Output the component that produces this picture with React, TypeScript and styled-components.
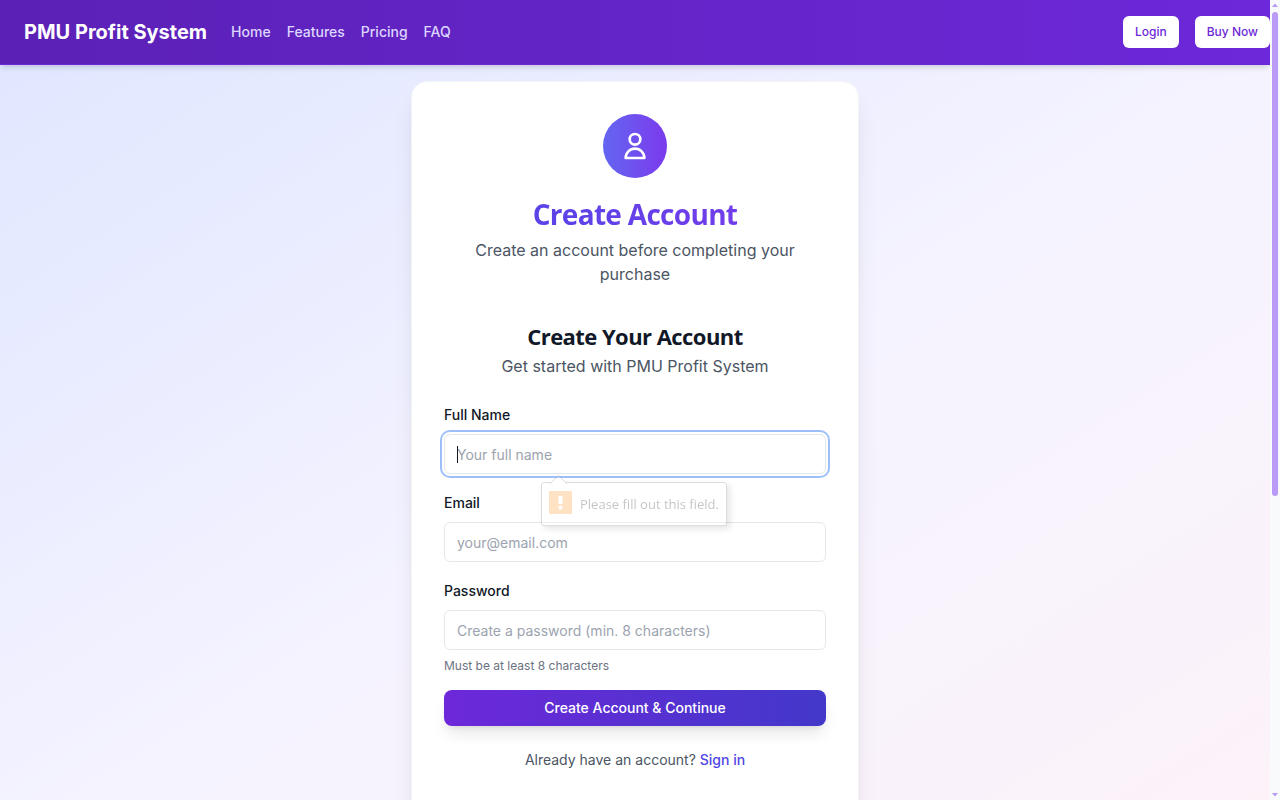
import React from 'react';
import styled, { createGlobalStyle } from 'styled-components';

const GlobalStyle = createGlobalStyle`
  *, *::before, *::after { box-sizing: border-box; }
  body {
    margin: 0;
    font-family: Inter, "Liberation Sans", sans-serif;
    font-size: 16px;
    line-height: 24px;
    color: #111827;
  }
  h1, h2, p { margin: 0; }
  a { text-decoration: none; }
`;

const Shell = styled.div`
  display: flex;
  height: 100vh;
  overflow: hidden;
  background: #f8fafc;
`;

const Page = styled.div`
  flex: 1;
  min-width: 0;
  display: flex;
  flex-direction: column;
  overflow: hidden;
`;

const Header = styled.header`
  position: relative;
  flex: none;
  display: flex;
  align-items: center;
  justify-content: space-between;
  height: 65px;
  padding-left: 24px;
  border-bottom: 1px solid #6d28d9;
  background: linear-gradient(to right, #5b21b6, #6d28d9);
  box-shadow: 0 4px 6px -1px rgba(0, 0, 0, 0.1), 0 2px 4px -2px rgba(0, 0, 0, 0.1);
`;

const Nav = styled.nav`
  display: flex;
  align-items: center;
  gap: 16px;
`;

const Brand = styled.a`
  margin-right: 8px;
  font-size: 20px;
  line-height: 28px;
  font-weight: 700;
  color: #fff;
`;

const NavLink = styled.a`
  font-size: 14px;
  line-height: 20px;
  font-weight: 500;
  color: #ddd6fe;
`;

const Actions = styled.div`
  display: flex;
  gap: 16px;
`;

const ActionButton = styled.button`
  height: 32px;
  padding: 0 12px;
  border: 0;
  border-radius: 6px;
  background: #fff;
  font: 500 12px/16px Inter, sans-serif;
  color: #6d28d9;
`;

const Main = styled.main`
  flex: 1 0 auto;
  display: flex;
  align-items: flex-start;
  justify-content: center;
  padding: 16px 16px 48px;
  background: linear-gradient(to bottom right, #e0e7ff, #f5f3ff, #fdf2f8);
`;

const Card = styled.section`
  width: 100%;
  max-width: 448px;
  padding: 32px;
  border: 1px solid #f3f4f6;
  border-radius: 16px;
  background: #fff;
  box-shadow: 0 20px 25px -5px rgba(0, 0, 0, 0.1), 0 8px 10px -6px rgba(0, 0, 0, 0.1);
`;

const Intro = styled.div`
  display: flex;
  flex-direction: column;
  align-items: center;
  margin-bottom: 34px;
  text-align: center;
`;

const Avatar = styled.div`
  display: flex;
  align-items: center;
  justify-content: center;
  width: 64px;
  height: 64px;
  margin-bottom: 18px;
  border-radius: 50%;
  background: linear-gradient(to right, #6366f1, #7c3aed);
`;

const Title = styled.h1`
  width: 100%;
  margin-bottom: 6px;
  font: 700 28px/36px "Open Sans", "Noto Sans", sans-serif;
  letter-spacing: -0.025em;
  background: linear-gradient(to right, #4f46e5, #7c3aed);
  background-clip: text;
  -webkit-background-clip: text;
  color: transparent;
`;

const Lead = styled.p`
  color: #4b5563;
`;

const FormHead = styled.div`
  margin-bottom: 24px;
  text-align: center;
`;

const Subtitle = styled.h2`
  margin-bottom: 2px;
  font: 700 22px/32px "Open Sans", "Noto Sans", sans-serif;
  letter-spacing: -0.025em;
`;

const Form = styled.form`
  display: flex;
  flex-direction: column;
  gap: 16px;
`;

const Field = styled.div`
  display: flex;
  flex-direction: column;
`;

const Label = styled.label`
  margin-bottom: 6px;
  font-size: 14px;
  line-height: 26px;
  font-weight: 500;
  color: #111827;
`;

const Control = styled.div`
  position: relative;
`;

const Input = styled.input<{ $active?: boolean }>`
  display: block;
  width: 100%;
  height: 40px;
  padding: 8px 12px;
  border: 1px solid #e5e7eb;
  border-radius: 6px;
  outline: none;
  background: #fff;
  font: 400 14px/20px Inter, sans-serif;
  color: #111827;
  box-shadow: ${(p) => (p.$active ? '0 0 0 2px #fff, 0 0 0 4px #9dc0fa' : 'none')};
  &::placeholder { color: #9ca3af; opacity: 1; }
`;

const Caret = styled.span`
  position: absolute;
  top: 12px;
  left: 13px;
  width: 1px;
  height: 17px;
  background: #111827;
`;

const Hint = styled.p`
  margin-top: 8px;
  font-size: 12px;
  line-height: 16px;
  color: #6b7280;
`;

const Submit = styled.button`
  height: 36px;
  border: 0;
  border-radius: 8px;
  background: linear-gradient(to right, #6d28d9, #4338ca);
  box-shadow: 0 10px 15px -3px rgba(0, 0, 0, 0.1), 0 4px 6px -4px rgba(0, 0, 0, 0.1);
  font: 500 14px/20px Inter, sans-serif;
  color: #fff;
`;

const SignIn = styled.p`
  margin: 24px 0;
  font-size: 14px;
  line-height: 20px;
  text-align: center;
  color: #4b5563;
  a { font-weight: 500; color: #4f46e5; }
`;

const Bubble = styled.div`
  position: absolute;
  z-index: 1;
  top: 48px;
  left: 97px;
  display: flex;
  align-items: center;
  gap: 8px;
  height: 44px;
  padding: 0 7px 4px;
  border: 1px solid #808080;
  border-radius: 3px;
  background: #fff;
  box-shadow: 3px 3px 6px rgba(0, 0, 0, 0.4);
  opacity: 0.26;
  font: 400 13px/20px "Open Sans", "Noto Sans", sans-serif;
  white-space: nowrap;
  color: #222;
`;

const BubbleText = styled.span`
  padding-top: 4px;
`;

const Pointer = styled.svg`
  position: absolute;
  top: -8px;
  left: 8px;
`;

const Scrollbar = styled.div`
  flex: none;
  display: flex;
  flex-direction: column;
  align-items: center;
  width: 10px;
  padding: 3px 0;
`;

const Track = styled.div`
  flex: 1;
  width: 6px;
  margin: 5px 0 6px;
`;

const Thumb = styled.div`
  height: 62.5%;
  border-radius: 3px;
  background: #b99af7;
`;

const links = ['Home', 'Features', 'Pricing', 'FAQ'];

export default function App() {
  return (
    <>
      <GlobalStyle />
      <Shell>
        <Page>
          <Header>
            <Nav>
              <Brand href="#">PMU Profit System</Brand>
              {links.map((l) => (
                <NavLink key={l} href={`#${l.toLowerCase()}`}>{l}</NavLink>
              ))}
            </Nav>
            <Actions>
              <ActionButton type="button">Login</ActionButton>
              <ActionButton type="button">Buy Now</ActionButton>
            </Actions>
          </Header>
          <Main>
            <Card>
              <Intro>
                <Avatar>
                  <svg width="32" height="32" viewBox="0 0 24 24" fill="none" stroke="#fff" strokeWidth="2" strokeLinecap="round" strokeLinejoin="round" aria-hidden="true">
                    <path d="M16 7a4 4 0 11-8 0 4 4 0 018 0zM12 14a7 7 0 00-7 7h14a7 7 0 00-7-7z" />
                  </svg>
                </Avatar>
                <Title>Create Account</Title>
                <Lead>Create an account before completing your purchase</Lead>
              </Intro>
              <FormHead>
                <Subtitle>Create Your Account</Subtitle>
                <Lead>Get started with PMU Profit System</Lead>
              </FormHead>
              <Form noValidate>
                <Field>
                  <Label htmlFor="name">Full Name</Label>
                  <Control>
                    <Input id="name" type="text" placeholder="Your full name" required $active />
                    <Caret />
                    <Bubble role="alert">
                      <Pointer width="17" height="9" viewBox="0 0 17 9" aria-hidden="true">
                        <path d="M0 9L8.500 0.500L17 9" fill="#fff" stroke="#808080" />
                      </Pointer>
                      <svg width="23" height="23" viewBox="0 0 23 23" aria-hidden="true">
                        <rect width="23" height="23" rx="1" fill="#ff9420" />
                        <rect x="9.500" y="5" width="4" height="8" fill="#fff" />
                        <circle cx="11.500" cy="16.500" r="2" fill="#fff" />
                      </svg>
                      <BubbleText>Please fill out this field.</BubbleText>
                    </Bubble>
                  </Control>
                </Field>
                <Field>
                  <Label htmlFor="email">Email</Label>
                  <Input id="email" type="email" placeholder="your@email.com" />
                </Field>
                <Field>
                  <Label htmlFor="password">Password</Label>
                  <Input id="password" type="password" placeholder="Create a password (min. 8 characters)" />
                  <Hint>Must be at least 8 characters</Hint>
                </Field>
                <Submit type="submit">Create Account &amp; Continue</Submit>
              </Form>
              <SignIn>
                Already have an account? <a href="#signin">Sign in</a>
              </SignIn>
            </Card>
          </Main>
        </Page>
        <Scrollbar aria-hidden="true">
          <svg width="6" height="4" viewBox="0 0 6 4"><path d="M3 0.500L6 4H0z" fill="#b99af7" /></svg>
          <Track><Thumb /></Track>
          <svg width="6" height="4" viewBox="0 0 6 4"><path d="M0 0H6L3 3.500z" fill="#b99af7" /></svg>
        </Scrollbar>
      </Shell>
    </>
  );
}
